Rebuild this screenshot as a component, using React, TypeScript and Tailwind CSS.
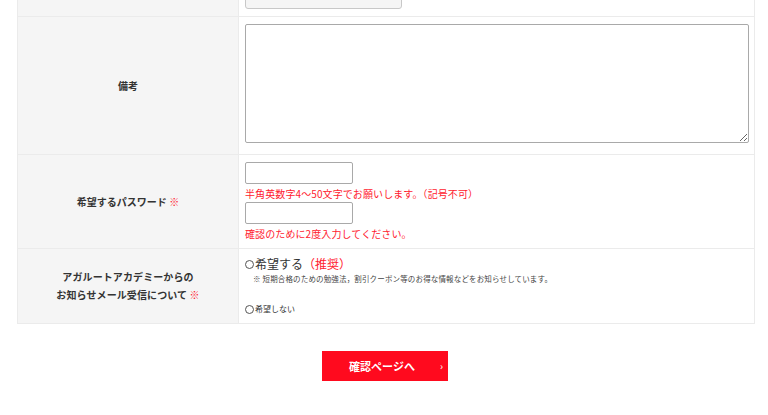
import React from "react";

const font = { fontFamily: '"Noto Sans CJK JP", "Noto Sans", sans-serif' };

function Radio() {
  return (
    <span className="inline-block w-[9px] h-[9px] rounded-full border border-[#555] bg-white shrink-0" />
  );
}

export default function App() {
  return (
    <div className="w-[768px] h-[415px] bg-white overflow-hidden text-[#333]" style={font}>
      <div className="ml-[17px] w-[738px] border-l border-r border-[#ebebeb]">
        {/* row 1 (partial) */}
        <div className="flex h-[17px] border-b border-[#ebebeb]">
          <div className="w-[221px] bg-[#f5f5f5] border-r border-[#ebebeb]" />
          <div className="flex-1 flex flex-col justify-end overflow-hidden pl-[6px] pb-[7px]">
            <div className="w-[157px] h-[30px] shrink-0 bg-[#f5f5f5] border border-[#c8c8c8] rounded-[3px]" />
          </div>
        </div>
        {/* row 2 備考 */}
        <div className="flex h-[138px] border-b border-[#ebebeb]">
          <div className="w-[221px] bg-[#f5f5f5] border-r border-[#ebebeb] flex items-center justify-center">
            <span className="text-[10px] font-bold">備考</span>
          </div>
          <div className="flex-1 pl-[6px] pr-[4px] pt-[7px]">
            <textarea className="block w-[504px] h-[119px] border border-[#a9a9a9] rounded-[2px] bg-white resize" />
          </div>
        </div>
        {/* row 3 password */}
        <div className="flex h-[94px] border-b border-[#ebebeb]">
          <div className="w-[221px] bg-[#f5f5f5] border-r border-[#ebebeb] flex items-center justify-center">
            <span className="text-[10px] font-bold">
              希望するパスワード <span className="text-[#ff1a2e] font-normal">※</span>
            </span>
          </div>
          <div className="flex-1 pl-[6px] pt-[7px] flex flex-col">
            <input type="password" className="block w-[108px] h-[22px] border border-[#a9a9a9] rounded-[2px] bg-white" />
            <div className="text-[10px] leading-[17px] pt-[1px] text-[#ff1a2e] tracking-[0.01em]">
              半角英数字4〜50文字でお願いします。（記号不可）
            </div>
            <input type="password" className="block w-[108px] h-[22px] border border-[#a9a9a9] rounded-[2px] bg-white" />
            <div className="text-[10px] leading-[20px] text-[#ff1a2e] tracking-[0.01em]">
              確認のために2度入力してください。
            </div>
          </div>
        </div>
        {/* row 4 mail */}
        <div className="flex h-[75px] border-b border-[#ebebeb]">
          <div className="w-[221px] bg-[#f5f5f5] border-r border-[#ebebeb] flex items-center justify-center">
            <div className="text-[10px] font-bold leading-[18px] text-center tracking-[0.01em]">
              <div>アガルートアカデミーからの</div>
              <div>
                お知らせメール受信について <span className="text-[#ff1a2e] font-normal">※</span>
              </div>
            </div>
          </div>
          <div className="flex-1 pl-[6px] pt-[7px]">
            <div className="flex items-center h-[16px] text-[12px] leading-none">
              <Radio />
              <span className="ml-[1px]">希望する</span>
              <span className="text-[#ff1a2e]">（推奨）</span>
            </div>
            <div className="ml-[8px] mt-[1px] text-[7.5px] leading-[12px] text-[#444] tracking-[0.02em]">
              ※ 短期合格のための勉強法，割引クーポン等のお得な情報などをお知らせしています。
            </div>
            <div className="flex items-center h-[14px] mt-[17px] text-[8px] leading-none">
              <Radio />
              <span className="ml-[1px]">希望しない</span>
            </div>
          </div>
        </div>
      </div>
      <div className="flex justify-center mt-[27px] ml-[2px]">
        <button className="relative w-[126px] h-[30px] bg-[#ff0a1e] text-white text-[11px] font-bold flex items-center justify-center">
          <span className="mr-[6px]">確認ページへ</span>
          <span className="absolute right-[5px] top-[7px] text-[10px] font-normal">›</span>
        </button>
      </div>
    </div>
  );
}
